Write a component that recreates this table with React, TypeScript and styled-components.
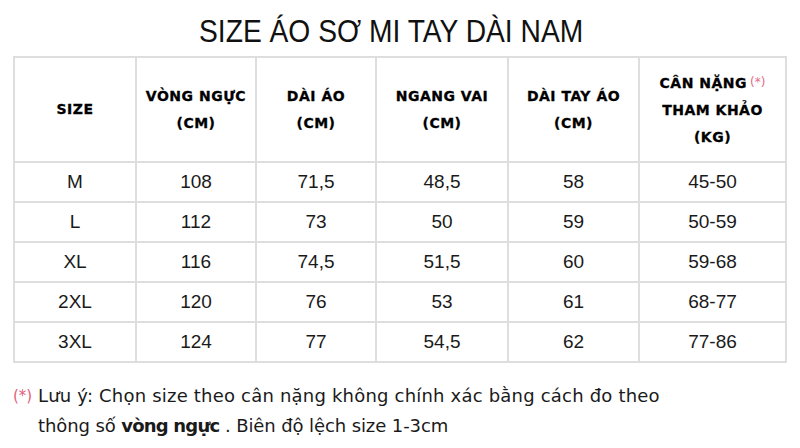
import React from 'react';
import styled, { createGlobalStyle } from 'styled-components';

const Global = createGlobalStyle`
  html, body { margin: 0; padding: 0; background: #fff; }
  body { width: 800px; height: 448px; overflow: hidden; }
`;

const Page = styled.div`
  width: 800px;
  height: 448px;
  box-sizing: border-box;
  padding: 0 15px 0 13px;
  font-family: "Liberation Sans", Arial, sans-serif;
  color: #111;
`;

const Title = styled.h1`
  margin: 17px 0 9px;
  height: 30px;
  font-size: 31px;
  line-height: 30px;
  font-weight: 400;
  text-align: center;
  padding-right: 16px;
  white-space: nowrap;
`;

const TitleText = styled.span`
  display: inline-block;
  transform: scaleX(0.91);
  transform-origin: center;
`;

const Table = styled.table`
  border-collapse: collapse;
  table-layout: fixed;
  width: 772px;
`;

const HeadCell = styled.th`
  height: 103px;
  padding: 0 4px;
  border: 2px solid #dedede;
  font-family: "DejaVu Sans", "Liberation Sans", sans-serif;
  font-weight: 700;
  font-size: 14px;
  letter-spacing: 0.5px;
  line-height: 27px;
  text-align: center;
  vertical-align: middle;
  color: #000;
  -webkit-text-stroke: 0.3px #000;
`;

const Cell = styled.td`
  height: 38px;
  padding: 0;
  border: 2px solid #dedede;
  font-size: 19px;
  text-align: center;
  vertical-align: middle;
  color: #1a1a1a;
`;

const Star = styled.span`
  font-family: "DejaVu Sans", sans-serif;
  font-weight: 400;
  font-size: 12px;
  letter-spacing: 0;
  color: #e46a85;
  -webkit-text-stroke: 0;
  vertical-align: 2px;
  margin-left: 3px;
`;

const Note = styled.div`
  display: flex;
  margin-top: 18px;
  font-family: "DejaVu Sans", "Liberation Sans", sans-serif;
  font-size: 18px;
  line-height: 30px;
  color: #1a1a1a;
`;

const NoteMark = styled.span`
  flex: 0 0 25px;
  font-size: 15px;
  color: #e2607a;
`;

const NoteText = styled.div`
  flex: 1;
`;

const NoteLine = styled.div<{ $spacing: number }>`
  letter-spacing: ${(p) => p.$spacing}px;
  white-space: nowrap;
`;

const Strong = styled.b`
  font-weight: 700;
  letter-spacing: -0.8px;
`;

const cols = [122, 120, 120, 132, 131, 147];

const headers: React.ReactNode[] = [
  'SIZE',
  <>VÒNG NGỰC<br />(CM)</>,
  <>DÀI ÁO<br />(CM)</>,
  <>NGANG VAI<br />(CM)</>,
  <>DÀI TAY ÁO<br />(CM)</>,
  <>CÂN NẶNG<Star>(*)</Star><br />THAM KHẢO<br />(KG)</>,
];

const rows = [
  ['M', '108', '71,5', '48,5', '58', '45-50'],
  ['L', '112', '73', '50', '59', '50-59'],
  ['XL', '116', '74,5', '51,5', '60', '59-68'],
  ['2XL', '120', '76', '53', '61', '68-77'],
  ['3XL', '124', '77', '54,5', '62', '77-86'],
];

export default function App() {
  return (
    <Page>
      <Global />
      <Title>
        <TitleText>SIZE ÁO SƠ MI TAY DÀI NAM</TitleText>
      </Title>
      <Table>
        <colgroup>
          {cols.map((w, i) => (
            <col key={i} style={{ width: w }} />
          ))}
        </colgroup>
        <thead>
          <tr>
            {headers.map((h, i) => (
              <HeadCell key={i}>{h}</HeadCell>
            ))}
          </tr>
        </thead>
        <tbody>
          {rows.map((r, i) => (
            <tr key={i}>
              {r.map((c, j) => (
                <Cell key={j}>{c}</Cell>
              ))}
            </tr>
          ))}
        </tbody>
      </Table>
      <Note>
        <NoteMark>(*)</NoteMark>
        <NoteText>
          <NoteLine $spacing={0.2}>
            Lưu ý: Chọn size theo cân nặng không chính xác bằng cách đo theo
          </NoteLine>
          <NoteLine $spacing={-0.1}>
            thông số <Strong>vòng ngực</Strong> . Biên độ lệch size 1-3cm
          </NoteLine>
        </NoteText>
      </Note>
    </Page>
  );
}
